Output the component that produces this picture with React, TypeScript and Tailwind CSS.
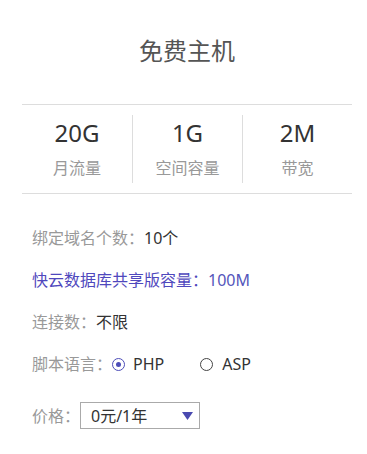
import React from 'react';

const STATS = [
  { value: '20G', label: '月流量' },
  { value: '1G', label: '空间容量' },
  { value: '2M', label: '带宽' },
];

const App: React.FC = () => {
  return (
    <div
      className="w-full bg-white pt-[33px] pl-[7px]"
      style={{ fontFamily: '"Noto Sans", "Noto Sans CJK SC", sans-serif' }}
    >
      <h1 className="text-center text-[24px] leading-[36px] text-[#555]">免费主机</h1>

      {/* Stats */}
      <div className="mx-[15px] mt-[35px] border-y border-[#ddd] py-[10px] grid grid-cols-3">
        {STATS.map((s, i) => (
          <div
            key={s.label}
            className={`flex flex-col items-center pt-[4px] pb-[4px] ${i > 0 ? 'border-l border-[#ddd]' : ''}`}
          >
            <span className="text-[24px] leading-[28px] text-[#333]">{s.value}</span>
            <span className="mt-[10px] text-[16px] leading-[22px] text-[#999]">{s.label}</span>
          </div>
        ))}
      </div>

      {/* Details */}
      <div className="pl-[25px] mt-[33px] flex flex-col text-[16px] leading-[22px]">
        <div className="flex items-center">
          <span className="text-[#999]">绑定域名个数：</span>
          <span className="text-[#333]">10个</span>
        </div>

        <div className="flex items-center mt-[20px] text-[#4f48bd]">
          <span>快云数据库共享版容量：</span>
          <span className="text-[#5556bb]">100M</span>
        </div>

        <div className="flex items-center mt-[20px]">
          <span className="text-[#999]">连接数：</span>
          <span className="text-[#333]">不限</span>
        </div>

        <div className="flex items-center mt-[20px]">
          <span className="text-[#999]">脚本语言：</span>
          <label className="flex items-center text-[#333]">
            <span className="w-[13px] h-[13px] rounded-full border border-[#4d4db8] flex items-center justify-center">
              <span className="w-[5px] h-[5px] rounded-full bg-[#4d4db8]" />
            </span>
            <span className="ml-[8px]">PHP</span>
          </label>
          <label className="flex items-center text-[#333] ml-[36px]">
            <span className="w-[13px] h-[13px] rounded-full border border-[#444]" />
            <span className="ml-[9px]">ASP</span>
          </label>
        </div>

        <div className="flex items-center mt-[27px]">
          <span className="text-[#999]">价格：</span>
          <div className="w-[120px] h-[27px] border border-[#aaa] flex items-center justify-between pl-[10px] pr-[6px] text-[#333]">
            <span>0元/1年</span>
            <svg width="11" height="8" viewBox="0 0 11 8">
              <path d="M0 0 H11 L5.5 8 Z" fill="#4a4ab0" />
            </svg>
          </div>
        </div>
      </div>
    </div>
  );
};

export default App;
